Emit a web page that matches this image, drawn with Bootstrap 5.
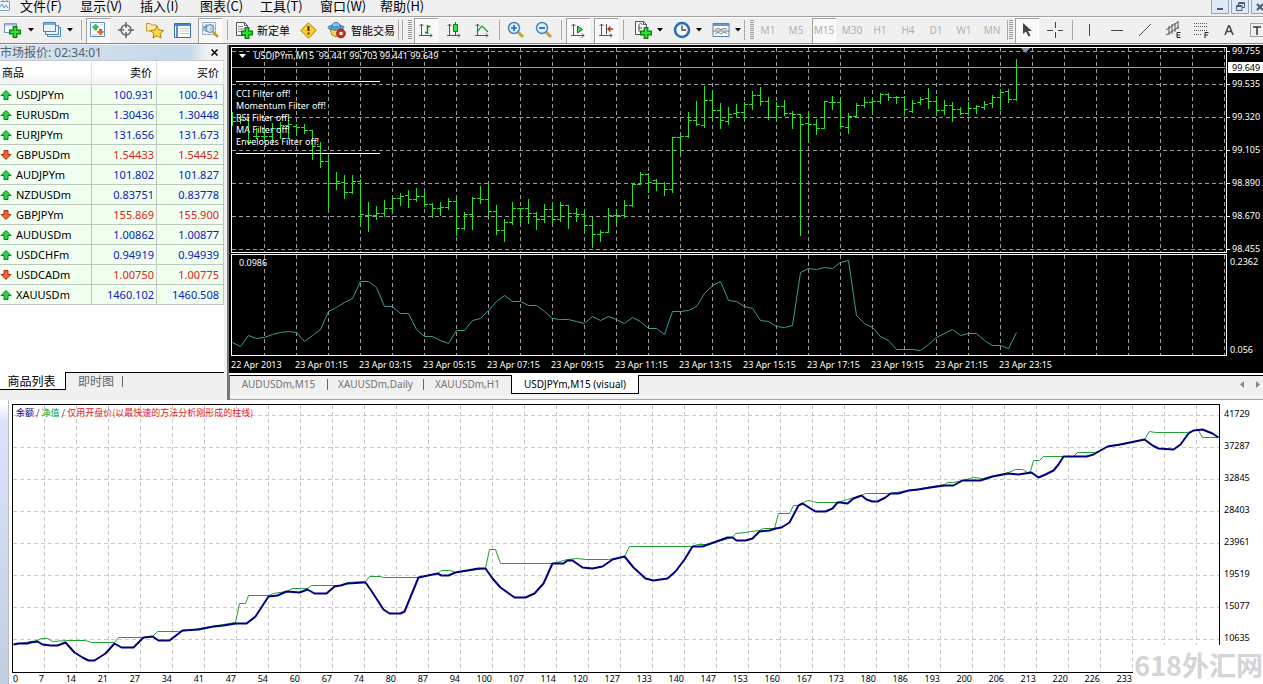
<!DOCTYPE html>
<html lang="zh-CN">
<head>
<meta charset="utf-8">
<meta name="viewport" content="width=device-width, initial-scale=1">
<title>USDJPYm,M15 (visual)</title>
<link href="https://cdn.jsdelivr.net/npm/bootstrap@5.3.0/dist/css/bootstrap.min.css" rel="stylesheet">
<style>
body{font:11px/1 "Noto Sans","Noto Sans CJK SC",sans-serif;background:#f0f0f0;color:#000;overflow:hidden}
button{border:0;background:none;padding:0;color:inherit;font:inherit;white-space:nowrap}
svg{display:block;flex:none}
.menubar{height:16px;padding-left:20px}
.menubar svg.appicon{position:absolute;left:0;top:0}
.menubar button{width:60px;height:12px;text-align:left;font:13px/12px "Noto Sans CJK SC",sans-serif}
.winbtns{gap:2px;margin-right:-6px}
.winbtns button{width:18px;height:14px;border:1px solid #8fa6c4;border-top:0;background:#dfe9f6;display:flex;justify-content:center;align-items:center}
.toolbar{height:28px;border-top:1px solid #a0a0a0;border-bottom:1px solid #868686;background:linear-gradient(#fff 1px,#f0f0f0 1px)}
.tbtn{width:28px;height:25px;flex:none;display:flex;align-items:center;justify-content:center}
.tbtn.on{box-shadow:inset 1px 1px #a0a0a0,inset -1px -1px #fff;background:#f8f8f8;width:24px;margin:0 2px}
.tdrop{width:39px;height:25px;flex:none;display:flex;align-items:center;padding-left:3px;gap:5px}
.tlabel{height:25px;flex:none;display:flex;align-items:center;padding-left:5px;gap:4px;font:11px/1 "Noto Sans CJK SC",sans-serif}
.tf{color:#b0b0b0;font-size:10px}
.tsep{width:6px;flex:none;height:20px;background:linear-gradient(#a8a8a8,#a8a8a8) center/1px 100% no-repeat}
.tsep.thin{width:3px}
.tgrip{width:4px;flex:none;height:20px;background:repeating-linear-gradient(#999 0 1px,transparent 1px 2px)}
.work{padding-top:1px;background:#f0f0f0}
.side{width:224px;flex:none;background:#fff}
.sidehead{height:16px;color:#56616e;font-size:12px;background:linear-gradient(90deg,#d7e3ee,#c5d9ea 85%,#f0f0f0 92%);border-bottom:1px solid #c4cad0;overflow:hidden}
.sidehead button{width:13px;height:13px;color:#000}
.quotes{width:100%;table-layout:fixed;border-collapse:separate;border-spacing:0;background:#fff}
.quotes th{height:24px;font-weight:400;background:linear-gradient(#fff 40%,#f1f2f3);border-right:1px solid #dedfe1;border-bottom:1px solid #d0d4d0;padding:0 4px 0 2px}
.quotes td{height:20px;background:#f0fff0;border-right:1px solid #bcc8bc;border-bottom:1px solid #bcc8bc;padding:0 2px 0 0;text-align:right}
.quotes td:first-child{text-align:left;padding:0}
.quotes td:last-child,.quotes th:last-child{padding-right:4px}
.quotes td svg{display:inline-block;margin-right:4px;vertical-align:-1px}
.up{color:#0a22b8}.down{color:#dc2418}
.sidetabs{height:28px;font:12px/16px "Noto Sans CJK SC",sans-serif;color:#666;background:#f0f0f0}
.sidetabs .rest{border-top:1px solid #000}
.sidetabs .cur{height:18px;width:66px;background:#fff;color:#000;border-right:1px solid #000;border-bottom:1px solid #000;padding-right:2px}
.split{width:5px;flex:none;border-right:2px solid #777}
.term{background:#000;color:#fff;font-size:9px;line-height:12px;padding:2px 0 0 2px}
.plotbox{border:1px solid #fff;min-width:0}
.plotbox>svg{width:100%}
.paxis{width:36px;flex:none;margin-top:-2px}
.paxis div{height:12px;margin-bottom:21px;padding-left:5px;position:relative}
.paxis div::before{content:"";position:absolute;left:0;top:6px;width:3px;height:1px;background:#fff}
.paxis .lowest{margin-bottom:-4px}
.paxis .bid{position:absolute;left:1px;top:17px;right:0;height:11px;line-height:11px;background:#fff;color:#000;padding-left:4px;margin:0}
.paxis .bid::before{display:none}
.oscrow{margin-top:1px}
.oscaxis{width:36px;flex:none;padding:2px 0 0 3px}
.ctitle{position:absolute;left:7px;top:2px;white-space:nowrap}
.comment{position:absolute;left:4px;top:33px;width:144px;border-top:1px solid #fff;border-bottom:1px solid #fff;padding:6px 0 6px;line-height:12px;height:73px}
.times{height:17px;overflow:hidden;padding-top:3px}
.times span{width:64px;flex:none;white-space:nowrap}
.ctabs{height:25px;border-top:1px solid #000;box-shadow:0 -2px #fff;margin-top:2px;color:#737373;font-size:10px;line-height:17px;border-left:1px solid #777;border-bottom:1px solid #a5a5a5;background:linear-gradient(#f0f0f0 20px,#fff 20px 21px,#f0f0f0 21px)}
.ctabs button{height:17px}
.ctabs .cur{background:#fff;color:#000;width:128px;height:19px;margin-top:-1px;border:solid #000;border-width:0 1px 1px}
.arrows{gap:12px;padding-right:3px}
.bar{width:1px;height:11px;background:#666;margin-top:3px}
.tester{background:#fff;font-size:9px;line-height:11px;min-height:284px}
.rail{width:9px;flex:none;background:linear-gradient(#fff 5px,#dbe3f8 20px,#c0cfe0);border-right:1px solid #b8bcc4}
.tplot{border:1px solid #000;margin-top:4px;min-width:0}
.tplot>svg{width:100%}
.legend{position:absolute;left:3px;top:2px;font:9px/12px "Noto Sans CJK SC",sans-serif;color:#223}
.taxis{width:43px;flex:none;padding:8px 0 0 4px}
.taxis div{height:12px;margin-bottom:20px}
.counts span{width:32px;flex:none;text-align:right}
.counts .zero{width:8px;text-align:left;padding-left:1px}
.counts .seven{width:24px}
.wmark{position:absolute;right:0;bottom:0;width:130px;height:39px;background:#fff;color:#d4d4d4;font:700 27px/39px "Noto Sans CJK SC",sans-serif;text-align:right;white-space:nowrap}
</style>
</head>
<body>
<svg width="0" height="0" class="position-absolute" aria-hidden="true">
<defs>
<symbol id="plus" viewBox="0 0 10 10"><path d="M3.5.5h3v3h3v3h-3v3h-3v-3h-3v-3h3z" fill="#2fe02f" stroke="#08780c"/></symbol>
<symbol id="axes" viewBox="0 0 16 16"><path d="M3.5 2v12M1 13.500h13M1.500 4l2-2 2 2M12 11.500l2 2-2 2" fill="none" stroke="#555"/></symbol>
<symbol id="caret" viewBox="0 0 6 4"><path d="M0 0h6L3 3.500z"/></symbol>
<symbol id="aup" viewBox="0 0 11 10"><path d="M5.500.5l5 5H7.500v4h-4v-4h-3z" fill="#2fd04a" stroke="#0b7a25"/></symbol>
<symbol id="adown" viewBox="0 0 11 10"><path d="M5.500 9.500l5-5H7.500v-4h-4v4h-3z" fill="#f4643a" stroke="#a82c0c"/></symbol>
<symbol id="sheet" viewBox="0 0 12 14"><path d="M.5.5h8l3 3v10H.500z" fill="#f8f8f8" stroke="#555"/><path d="M8.500.5v3h3" fill="none" stroke="#555"/></symbol>
</defs>
</svg>

<nav class="menubar d-flex position-relative" aria-label="菜单">
<svg class="appicon" width="12" height="12" viewBox="0 0 12 12"><path d="M-1 1.500h10.500v9H-1z" fill="#eef6fc" stroke="#7aa5cc"/><path d="M0 7l2-3 2 4 2-3 2 3M3 0v2M7 0v2" fill="none" stroke="#5b95c8"/></svg>
<button>文件(F)</button><button>显示(V)</button><button>插入(I)</button><button>图表(C)</button><button>工具(T)</button><button>窗口(W)</button><button>帮助(H)</button>
<div class="winbtns d-flex ms-auto">
<button aria-label="最小化"><svg width="8" height="8"><path d="M1 6h6" stroke="#4a5a72" stroke-width="2"/></svg></button>
<button aria-label="还原"><svg width="9" height="9"><path d="M2.500 3V.5h6v5H6M.5 3.500h5.500v5H.500zM.5 4.500h5M3 1.500h5" fill="none" stroke="#4a5a72"/></svg></button>
<button aria-label="关闭"><svg width="8" height="8"><path d="M1 1l6 6M7 1L1 7" stroke="#4a5a72" stroke-width="2"/></svg></button>
</div>
</nav>

<div class="toolbar d-flex align-items-center overflow-hidden" role="toolbar">
<button class="tdrop" aria-label="新图表"><svg width="20" height="18" viewBox="0 0 20 18"><path d="M1.500 2.500h12v9h-12z" fill="#f4faff" stroke="#7590ad"/><path d="M2 3.500h11" stroke="#8fb7dd" stroke-width="2"/><use href="#plus" x="6" y="5" width="12" height="12"/></svg><svg width="6" height="4"><use href="#caret"/></svg></button>
<button class="tdrop" aria-label="模板组"><svg width="20" height="18" viewBox="0 0 20 18"><g fill="#eaf4fd" stroke="#4d82b8"><path d="M5.500 6.500h13v9h-13z"/><path d="M3.500 4.500h13v9h-13z"/><path d="M1.500 1.500h12v9h-12z"/></g><path d="M2 3h11" stroke="#7eb0e0" stroke-width="2"/></svg><svg width="6" height="4"><use href="#caret"/></svg></button>
<div class="tsep"></div>
<button class="tbtn on" aria-label="市场报价"><svg width="18" height="18" viewBox="0 0 18 18"><path d="M1.500 1.500h14v14h-14z" fill="#fff" stroke="#5c8fc6"/><path d="M3 14h11M11 4h3" stroke="#ccc"/><use href="#aup" x="3" y="2" width="7" height="8"/><use href="#adown" x="8" y="7" width="7" height="8"/></svg></button>
<button class="tbtn" aria-label="十字准线"><svg width="16" height="16" viewBox="0 0 16 16"><circle cx="8" cy="8" r="5" fill="none" stroke="#666" stroke-width="1.500"/><path d="M8 0v6M8 10v6M0 8h6M10 8h6" stroke="#666" stroke-width="1.500"/></svg></button>
<button class="tbtn" aria-label="导航"><svg width="19" height="18" viewBox="0 0 19 18"><path d="M1.500 10V2.500h4l1 1.500h5V10z" fill="#ffe99c" stroke="#b99a3c"/><path d="M12 5l2 4 4.500.6-3.300 3 .9 4.400-4.100-2.200L8 17l.8-4.400-3.300-3L10 9z" fill="#ffd83b" stroke="#a97f12"/></svg></button>
<button class="tbtn" aria-label="数据窗口"><svg width="17" height="15" viewBox="0 0 17 15"><path d="M.5.5h16v14H.500z" fill="#fff" stroke="#386eb0"/><path d="M1 2h15" stroke="#4c86c6" stroke-width="2"/><path d="M3 3v11" stroke="#5c8fc6" stroke-width="2"/><path d="M6 5.500h9M6 8h9M6 10.500h9" stroke="#c8c8c8"/></svg></button>
<button class="tbtn on" aria-label="策略测试"><svg width="18" height="18" viewBox="0 0 18 18"><path d="M1.500 1.500h13v12h-13z" fill="#eef4fa" stroke="#9bb3cc"/><path d="M3 10V5M5 11V3M3 6h4M10 10V4M12 9V4" stroke="#66788c"/><circle cx="9" cy="7.500" r="4" fill="#bcdcf4" fill-opacity=".6" stroke="#5e86aa"/><path d="M12 11l5 5" stroke="#c79a2e" stroke-width="2.500"/></svg></button>
<div class="tsep"></div>
<button class="tlabel me-1"><svg width="18" height="18" viewBox="0 0 18 18"><use href="#sheet" x="1" y="1" width="12" height="14"/><path d="M3 5.500h5M3 8h7M3 10.500h5" stroke="#888"/><use href="#plus" x="6" y="6" width="12" height="12"/></svg>新定单</button>
<button class="tbtn" aria-label="警告"><svg width="17" height="17" viewBox="0 0 17 17"><path d="M8.500.8l7.700 7.700-7.700 7.700L.8 8.500z" fill="#fbcf2b" stroke="#a57c0c"/><path d="M8.500 4v5M8.500 10.500v2" stroke="#3c2f05" stroke-width="2"/></svg></button>
<button class="tlabel"><svg width="20" height="18" viewBox="0 0 20 18"><path d="M3 8h12l-2 6-4 2-4-2z" fill="#f6cf58" stroke="#a9822c"/><ellipse cx="9" cy="6.500" rx="8" ry="2.500" fill="#5ea9dc" stroke="#2f73a8"/><path d="M4.500 6C5 0 13 0 13.500 6z" fill="#82c3ec" stroke="#2f73a8"/><circle cx="14" cy="12.500" r="4.300" fill="#e02a1c" stroke="#901208"/><path d="M12.500 11h3v3h-3z" fill="#fff"/></svg>智能交易</button>
<div class="tsep"></div><div class="tsep thin me-1"></div><div class="tgrip"></div>
<button class="tbtn on" aria-label="柱状图"><svg width="16" height="16"><use href="#axes"/><path d="M9.500 3v9M7 10.500h2.500M9.500 4.500h3" stroke="#0b8a1c" stroke-width="1.500"/></svg></button>
<button class="tbtn" aria-label="蜡烛图"><svg width="16" height="16"><use href="#axes"/><path d="M9.500 0v13" stroke="#0b7a1c"/><path d="M7.500 2.500h4v7h-4z" fill="#2fe046" stroke="#0b7a1c"/></svg></button>
<button class="tbtn" aria-label="折线图"><svg width="16" height="16"><use href="#axes"/><path d="M3 10C6 7 7 3 9 5l5 5" fill="none" stroke="#1fa02c" stroke-width="1.300"/></svg></button>
<div class="tsep"></div>
<button class="tbtn" aria-label="放大"><svg width="18" height="18" viewBox="0 0 18 18"><path d="M11 11l5 5" stroke="#caa02d" stroke-width="3"/><circle cx="7" cy="7" r="5.500" fill="#d9efff" stroke="#4b87bd" stroke-width="1.500"/><path d="M4 7h6M7 4v6" stroke="#2b64ac" stroke-width="1.700"/></svg></button>
<button class="tbtn" aria-label="缩小"><svg width="18" height="18" viewBox="0 0 18 18"><path d="M11 11l5 5" stroke="#caa02d" stroke-width="3"/><circle cx="7" cy="7" r="5.500" fill="#d9efff" stroke="#4b87bd" stroke-width="1.500"/><path d="M4 7h6" stroke="#2b64ac" stroke-width="1.700"/></svg></button>
<div class="tsep"></div>
<button class="tbtn on" aria-label="自动滚动"><svg width="16" height="16"><use href="#axes"/><path d="M7.500 4l5 3.500-5 3.500z" fill="#37d94c" stroke="#0b7a1c"/></svg></button>
<button class="tbtn on" aria-label="图表平移"><svg width="16" height="16"><use href="#axes"/><path d="M8.500 2v10" stroke="#444"/><path d="M15 7h-5M12.500 4.500L10 7l2.500 2.500" fill="none" stroke="#9a4310" stroke-width="1.300"/></svg></button>
<div class="tsep"></div>
<button class="tdrop ps-2" aria-label="指标"><svg width="18" height="18" viewBox="0 0 18 18"><use href="#sheet" x="1" y="0" width="12" height="14"/><path d="M5 11V4c0-2 3-2 3 0M4 7h4" fill="none" stroke="#555"/><use href="#plus" x="6" y="6" width="12" height="12"/></svg><svg width="6" height="4"><use href="#caret"/></svg></button>
<button class="tdrop ps-2" aria-label="周期"><svg width="18" height="18" viewBox="0 0 18 18"><circle cx="9" cy="9" r="7" fill="#f2f9ff" stroke="#2a6fb4" stroke-width="2.600"/><path d="M9 4.500V9h4" fill="none" stroke="#444" stroke-width="1.300"/></svg><svg width="6" height="4"><use href="#caret"/></svg></button>
<button class="tdrop ps-2" aria-label="模板"><svg width="18" height="16" viewBox="0 0 18 16"><path d="M1 1.500h16v13H1z" fill="#fff" stroke="#4d82b8"/><path d="M1 3h16" stroke="#5c98d6" stroke-width="2"/><path d="M3 7.500l3-1 3 1 3-1 3 .5M3 12l3-2 3 2 3-2 3 1.500M1 9h16" fill="none" stroke="#777"/></svg><svg width="6" height="4"><use href="#caret"/></svg></button>
<div class="tsep thin"></div><div class="tgrip ms-1"></div>
<button class="tbtn tf">M1</button><button class="tbtn tf">M5</button><button class="tbtn tf on">M15</button><button class="tbtn tf">M30</button><button class="tbtn tf">H1</button><button class="tbtn tf">H4</button><button class="tbtn tf">D1</button><button class="tbtn tf">W1</button><button class="tbtn tf">MN</button>
<div class="tsep thin"></div><div class="tgrip"></div>
<button class="tbtn on" aria-label="光标"><svg width="12" height="16"><path d="M2 1v11l3-2.500 2.500 5 2-1L7 9h4z" fill="#444"/></svg></button>
<button class="tbtn" aria-label="十字线"><svg width="16" height="16"><path d="M8.500 0v6M8.500 10v6M0 8.500h6M11 8.500h5" stroke="#444"/></svg></button>
<div class="tsep"></div>
<button class="tbtn" aria-label="垂直线"><svg width="16" height="16"><path d="M8.500 2v12" stroke="#444"/></svg></button>
<button class="tbtn" aria-label="水平线"><svg width="16" height="16"><path d="M2 8.500h12" stroke="#444"/></svg></button>
<button class="tbtn" aria-label="趋势线"><svg width="16" height="16"><path d="M2 14L14 2" stroke="#555"/></svg></button>
<button class="tbtn" aria-label="等距通道"><svg width="17" height="18"><path d="M1 9L13 1M1 14L14 6M4 5v9M7 3v10M10 2v9M13 0v8" stroke="#555"/><path d="M15.500 11.500h-3.500v5h3.500M12 14h3" fill="none" stroke="#222"/></svg></button>
<button class="tbtn" aria-label="斐波那契"><svg width="17" height="18"><path d="M1 2.500h14M1 5.500h14M1 9.500h14M1 13.500h8" stroke="#555" stroke-dasharray="1 1"/><path d="M15.500 11.500h-3.500V17M12 14h3" fill="none" stroke="#222"/></svg></button>
<button class="tbtn" aria-label="文字"><svg width="10" height="10"><path d="M1 10L4.500 1h1L9 10M2.500 6.500h5" fill="none" stroke="#444" stroke-width="1.500"/></svg></button>
<button class="tbtn" aria-label="文字标签"><svg width="16" height="16"><path d="M1.500 1.500h13v13h-13z" fill="none" stroke="#555" stroke-dasharray="1 1"/><path d="M4 5h8M8 5v8" stroke="#333" stroke-width="1.500"/></svg></button>
</div>

<div class="work d-flex">
<aside class="side d-flex flex-column">
<div class="sidehead d-flex justify-content-between align-items-center"><span>市场报价: 02:34:01</span><button aria-label="关闭市场报价"><svg width="7" height="7"><path d="M.5.5l6 6M6.500.5l-6 6" stroke="#000" stroke-width="1.500"/></svg></button></div>
<table class="quotes"><colgroup><col style="width:92px"><col style="width:65px"><col></colgroup>
<thead><tr><th scope="col" class="text-start">商品</th><th scope="col" class="text-end">卖价</th><th scope="col" class="text-end">买价</th></tr></thead>
<tbody id="quotes"></tbody></table>
<div class="flex-grow-1"></div>
<div class="sidetabs d-flex"><button class="cur">商品列表</button><div class="rest flex-grow-1 d-flex gap-2"><button class="ps-2 ms-1 align-self-start">即时图</button><div class="bar"></div></div></div>
</aside>
<div class="split"></div>
<main class="flex-grow-1" style="min-width:0">
<div class="term">
<div class="d-flex">
<div class="plotbox flex-grow-1 position-relative">
<svg id="price" height="204"></svg>
<div class="ctitle d-flex align-items-center"><svg width="7" height="4"><path d="M0 0h7L3.500 4z" fill="#fff"/></svg><span class="ps-1 ms-1">USDJPYm,M15&nbsp; 99.441 99.703 99.441 99.649</span></div>
<div class="comment">CCI Filter off!<br>Momentum Filter off!<br>RSI Filter off!<br>MA Filter off!<br>Envelopes Filter off!</div>
</div>
<div class="paxis position-relative"><div>99.755</div><div>99.535</div><div>99.320</div><div>99.105</div><div>98.890</div><div>98.670</div><div class="lowest">98.455</div><div class="bid">99.649</div></div>
</div>
<div class="oscrow d-flex">
<div class="plotbox flex-grow-1 position-relative"><svg id="osc" height="100"></svg><div class="ctitle">0.0986</div></div>
<div class="oscaxis d-flex flex-column justify-content-between"><span>0.2362</span><span>0.056</span></div>
</div>
<div class="times d-flex" id="times"></div>
</div>
<div class="ctabs d-flex">
<button style="width:97px">AUDUSDm,M15</button><div class="bar"></div><button style="width:95px">XAUUSDm,Daily</button><div class="bar"></div><button style="width:87px">XAUUSDm,H1</button><button class="cur">USDJPYm,M15 (visual)</button>
<div class="arrows ms-auto d-flex"><button aria-label="向左"><svg width="4" height="7"><path d="M4 0v7L0 3.500z" fill="#888"/></svg></button><button aria-label="向右"><svg width="4" height="7"><path d="M0 0v7l4-3.500z" fill="#888"/></svg></button></div>
</div>
</main>
</div>

<section class="tester d-flex position-relative overflow-hidden">
<div class="rail"></div><div style="width:3px"></div>
<div class="flex-grow-1" style="min-width:0">
<div class="tplot position-relative"><svg id="equity" height="267"></svg>
<div class="legend"><span style="color:#00007c">余额</span> / <span style="color:#0ca028">净值</span> / <span style="color:#e0201c">仅用开盘价(以最快速的方法分析刚形成的柱线)</span></div></div>
<div class="counts d-flex overflow-hidden" id="counts"></div>
</div>
<div class="taxis"><div>41729</div><div>37287</div><div>32845</div><div>28403</div><div>23961</div><div>19519</div><div>15077</div><div>10635</div></div>
<div class="wmark">618外汇网</div>
</section>

<script>
const rows=[["USDJPYm","100.931","100.941",1],["EURUSDm","1.30436","1.30448",1],["EURJPYm","131.656","131.673",1],["GBPUSDm","1.54433","1.54452",0],["AUDJPYm","101.802","101.827",1],["NZDUSDm","0.83751","0.83778",1],["GBPJPYm","155.869","155.900",0],["AUDUSDm","1.00862","1.00877",1],["USDCHFm","0.94919","0.94939",1],["USDCADm","1.00750","1.00775",0],["XAUUSDm","1460.102","1460.508",1]];
document.getElementById("quotes").innerHTML=rows.map(([s,a,b,u])=>{const c=u?"up":"down";return `<tr><td><svg width="12" height="10"><use href="#a${c}"/></svg>${s}</td><td class="${c}">${a}</td><td class="${c}">${b}</td></tr>`}).join("");

// vertical and horizontal dashed grid over the whole plot
function grid(svg,x0,ys,color){
  const w=svg.clientWidth,h=svg.clientHeight;let d="";
  for(let x=x0;x<w;x+=32)d+=`M${x+.5} 0V${h}`;
  for(const y of ys)d+=`M0 ${y+.5}H${w}`;
  return `<path d="${d}" stroke="${color}" stroke-dasharray="4 3" fill="none"/>`;
}
// high, low, open, close of each bar, in plot rows
const bars=[[112,125,118,121],[117,123,121,119],[117,143,119,142],[128,138,136,136],[128,141,136,136],[123,143,136,128],[122,138,128,125],[117,138,125,124],[124,135,126,127],[124,133,127,130],[130,159,130,146],[142,167,146,161],[155,208,161,183],[172,189,183,181],[175,198,182,192],[175,193,192,181],[179,224,181,214],[202,231,215,215],[206,219,215,213],[200,216,213,208],[197,213,208,198],[193,205,198,196],[190,207,195,199],[188,201,199,196],[192,206,196,204],[203,217,204,208],[202,215,208,207],[198,209,207,201],[197,235,201,228],[212,229,228,214],[197,229,214,198],[186,203,198,199],[184,215,199,211],[205,234,211,230],[219,241,230,222],[202,224,222,208],[208,223,208,208],[199,223,208,213],[212,229,213,219],[204,222,219,209],[203,223,209,219],[202,221,219,205],[205,228,205,213],[208,221,213,214],[209,230,214,225],[217,247,225,234],[230,241,234,232],[208,232,232,215],[209,223,215,215],[200,217,215,205],[183,206,205,184],[172,184,184,174],[173,192,174,182],[179,190,180,183],[182,195,183,189],[137,192,189,137],[135,152,137,136],[112,137,136,120],[101,125,120,124],[86,127,125,100],[90,118,100,110],[103,128,110,120],[107,124,121,114],[104,117,113,112],[102,121,112,104],[91,109,104,95],[87,105,95,101],[97,119,101,117],[102,120,117,106],[100,115,106,113],[111,128,113,114],[114,235,114,124],[114,140,123,124],[119,134,124,128],[101,128,128,101],[96,109,102,102],[100,128,102,126],[113,133,127,116],[103,116,116,105],[97,107,105,102],[97,112,102,101],[93,103,101,94],[93,100,94,97],[96,103,97,97],[96,115,97,109],[100,112,111,103],[97,104,102,99],[88,108,98,101],[96,115,101,110],[100,114,110,105],[102,121,105,109],[107,114,109,113],[102,115,113,108],[105,113,108,106],[101,109,107,104],[95,107,103,97],[89,109,97,92],[89,102,91,99],[59,100,99,67]];
const price=document.getElementById("price");let d="";
bars.forEach(([h,l,o,c],i)=>{const x=i*8;d+=`M${x+.5} ${h-48}V${l-47}M${x-3} ${o-47.5}h3M${x+1} ${c-47.5}h3`});
price.innerHTML=grid(price,32,[3,36,69,102,135,168,201],"#9a9a9a")+`<path d="M0 19.500H${price.clientWidth}" stroke="#a0a0a0"/><path d="M789 0h9l-4.500 5z" fill="#8090a4"/><path d="${d}" stroke="#2be02b" fill="none"/>`;

const series=[276,287,255,264,261,253,246,243,246,273,255,236,182,172,157,143,94,94,111,168,169,189,190,236,259,259,269,279,240,240,210,204,179,152,134,153,154,165,166,184,203,208,208,214,220,199,210,199,208,220,202,213,235,235,253,184,184,180,167,130,106,92,150,154,168,175,210,214,228,232,226,67,55,58,52,55,35,31,195,219,231,258,270,298,296,297,300,281,261,250,236,255,250,250,271,286,286,294,246];
const osc=document.getElementById("osc");
osc.innerHTML=grid(osc,32,[],"#9a9a9a")+`<polyline points="${series.map((v,i)=>i*8+.5+","+(Math.round(v/3)-4.5)).join(" ")}" fill="none" stroke="#3c9c92"/>`;
document.getElementById("times").innerHTML=["22 Apr 2013","23 Apr 01:15","23 Apr 03:15","23 Apr 05:15","23 Apr 07:15","23 Apr 09:15","23 Apr 11:15","23 Apr 13:15","23 Apr 15:15","23 Apr 17:15","23 Apr 19:15","23 Apr 21:15","23 Apr 23:15"].map(t=>`<span>${t}</span>`).join("");

const balance="13,644 18,643 27,643 30,642 37,641 42,644 50,645 57,645 65,642 74,652 82,657 88,660 94,660 105,653 114,643 121,647 133,647 143,637 152,636 158,640 169,640 182,630 198,629 213,626 223,625 235,623 246,623 255,616 268,596 277,595 286,591 299,592 307,589 314,593 326,593 334,586 340,585 347,583 363,582 365,582 370,589 383,609 389,613 400,613 404,611 418,577 437,573 441,575 448,575 455,572 478,568 485,568 492,578 500,587 514,597 525,597 534,593 543,583 552,563 563,563 567,560 572,560 582,567 592,568 602,566 612,559 624,556 633,567 645,578 653,580 667,578 675,571 684,559 692,546 702,546 727,537 732,537 736,540 745,540 752,538 759,531 769,530 775,528 781,527 789,522 798,505 802,503 815,511 825,511 832,508 837,502 840,502 847,503 853,498 861,495 866,499 872,501 877,501 885,497 890,493 898,493 908,490 918,489 930,487 944,485 953,485 962,480 980,480 992,476 1008,473 1018,474 1031,472 1038,477 1045,474 1053,470 1058,464 1063,456 1086,456 1093,454 1107,446 1120,444 1144,439 1152,445 1158,448 1173,449 1180,444 1188,433 1193,430 1202,429 1212,433 1218,437";
const net="13,644 37,640 41,638 47,638 52,641 67,640 85,640 91,642 114,642 118,637 143,637 152,636 157,631 178,631 187,630 235,622 239,603 245,603 248,595 268,595 273,593 286,591 292,588 307,588 311,585 340,585 347,582 365,581 369,576 380,576 383,577 418,577 437,573 441,570 450,570 455,572 485,568 489,549 495,549 500,563 552,563 567,559 577,558 585,559 608,559 624,556 629,546 692,546 697,544 707,544 732,537 735,533 745,532 750,531 759,530 763,528 774,528 778,513 789,513 793,505 798,505 802,503 807,500 813,501 816,502 837,502 847,499 861,495 865,493 890,493 944,484 947,482 953,482 962,480 973,477 982,478 1008,472 1015,469 1022,469 1027,472 1030,471 1033,460 1039,460 1043,456 1073,456 1077,452 1095,452 1107,446 1144,439 1149,431 1155,432 1187,432 1193,430 1198,430 1202,437 1218,437";
const eq=document.getElementById("equity");
eq.innerHTML=grid(eq,31,[10,42,74,106,138,170,202,234],"#c8c8c8")+`<g transform="translate(-12.500 -404.500)" fill="none"><polyline points="${net}" stroke="#20a030"/><polyline points="${balance}" stroke="#000080" stroke-width="2" stroke-linejoin="round"/></g>`;
document.getElementById("counts").innerHTML=[0,7,14,21,27,34,41,47,54,60,67,74,80,87,94,100,107,114,120,127,133,140,147,153,160,167,173,180,186,193,200,206,213,220,226,233].map((n,i)=>`<span class="${["zero","seven"][i]||""}">${n}</span>`).join("");
</script>
<script src="https://cdn.jsdelivr.net/npm/bootstrap@5.3.0/dist/js/bootstrap.bundle.min.js"></script>
</body>
</html>
